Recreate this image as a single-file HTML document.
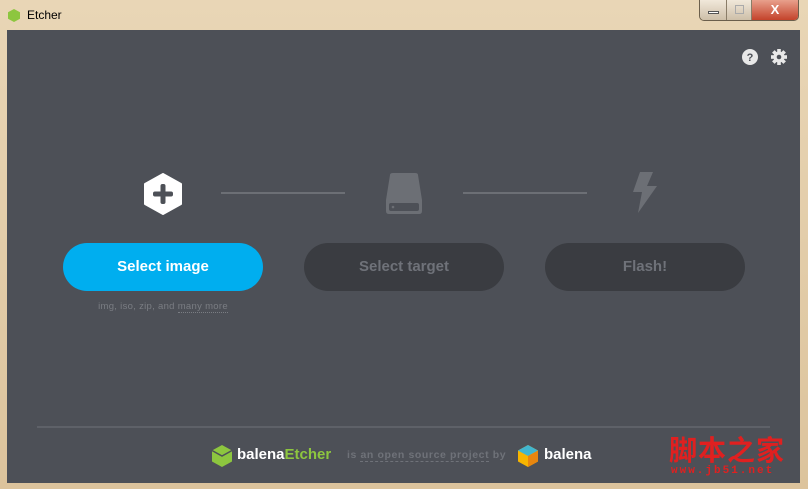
<!DOCTYPE html>
<html><head><meta charset="utf-8"><style>
*{margin:0;padding:0;box-sizing:border-box}
body{width:808px;height:489px;overflow:hidden;background:linear-gradient(180deg,#e9d6b6,#dcc39c);font-family:"Liberation Sans",sans-serif;position:relative}
.title{position:absolute;left:27px;top:8px;font-size:12px;color:#000}
.ico{position:absolute;left:8px;top:9px;width:12px;height:13px;background:#8dc63f;clip-path:polygon(50% 0,100% 25%,100% 75%,50% 100%,0 75%,0 25%)}
.btns{position:absolute;left:699px;top:0;height:21px;display:flex;border:1px solid #6b5f4c;border-top:none;border-radius:0 0 5px 5px;overflow:hidden}
.btns div{height:20px;background:linear-gradient(#f1e8da,#cdbfa8);border-right:1px solid #8a7d68}
.main{position:absolute;left:7px;top:30px;width:793px;height:453px;background:#4d5057}
.line{position:absolute;height:2px;background:#6c6f75}
.btn{position:absolute;top:213px;width:200px;height:48px;border-radius:24px;font-weight:bold;font-size:15px;text-align:center;line-height:48px}
.foot{position:absolute;left:30px;top:396px;width:733px;height:2px;background:#5e6168}
</style></head><body>
<div class="ico"></div><div class="title">Etcher</div>
<div class="btns"><div style="width:27px;position:relative"><span style="position:absolute;left:8px;top:11px;width:11px;height:3px;border:1px solid #555;background:#fff"></span></div><div style="width:25px;position:relative"><span style="position:absolute;left:8px;top:5px;width:9px;height:9px;border:1px solid #aaa"></span></div><div style="width:46px;background:linear-gradient(#e8a08c,#c4432b);color:#fff;font-weight:bold;text-align:center;line-height:19px;font-size:13px;border:none">X</div></div>
<div class="main">
<svg style="position:absolute;left:733px;top:18px" width="52" height="20" viewBox="0 0 52 20">
<circle cx="10" cy="9" r="8" fill="#e8e8e8"/><text x="10" y="13" font-size="11" font-weight="bold" text-anchor="middle" fill="#4d5057" font-family="Liberation Sans">?</text>
<g transform="translate(39,9)" fill="#e8e8e8"><circle r="5.5"/><g id="t"><rect x="-1.8" y="-8" width="3.6" height="16"/></g><use href="#t" transform="rotate(45)"/><use href="#t" transform="rotate(90)"/><use href="#t" transform="rotate(135)"/><circle r="2.3" fill="#4d5057"/></g>
</svg>
<svg style="position:absolute;left:137px;top:143px" width="38" height="42" viewBox="0 0 38 42"><polygon points="19,1 37,11 37,31 19,41 1,31 1,11" fill="#fff" stroke="#fff" stroke-linejoin="round" stroke-width="2"/><rect x="16.5" y="11" width="5" height="20" rx="2" fill="#4d5057"/><rect x="9" y="18.5" width="20" height="5" rx="2" fill="#4d5057"/></svg>
<div class="line" style="left:214px;top:162px;width:124px"></div>
<div class="line" style="left:456px;top:162px;width:124px"></div>
<svg style="position:absolute;left:377px;top:143px" width="40" height="42" viewBox="0 0 40 42"><path d="M6 2 Q6 0 9 0 H31 Q34 0 34 2 L38 27 V38 Q38 41 35 41 H5 Q2 41 2 38 V27 Z" fill="#6c6f75"/><rect x="5" y="30" width="30" height="8" rx="2" fill="#4d5057"/><circle cx="9" cy="34" r="1.3" fill="#6c6f75"/></svg>
<svg style="position:absolute;left:623px;top:142px" width="28" height="42" viewBox="0 0 28 42"><path d="M10 0 H23 L17 14 H27 L8 41 L12 20 H3 Z" fill="#6c6f75"/></svg>
<div class="btn" style="left:56px;background:#00aeef;color:#fff">Select image</div>
<div class="btn" style="left:297px;background:#3a3c41;color:#6f7279">Select target</div>
<div class="btn" style="left:538px;background:#3a3c41;color:#6f7279">Flash!</div>
<div style="position:absolute;left:56px;width:200px;top:271px;text-align:center;font-size:9.5px;color:#7a7d83;letter-spacing:.3px">img, iso, zip, and <span style="border-bottom:1px dotted #7a7d83">many more</span></div>
<div class="foot"></div>
<svg style="position:absolute;left:204px;top:414px" width="22" height="24" viewBox="0 0 22 24"><polygon points="11,1 21,6.5 21,17.5 11,23 1,17.5 1,6.5" fill="#8dc63f"/><polyline points="1,6.5 11,12 21,6.5 M11,12 11,23" fill="none" stroke="#4d5057" stroke-width="1.5"/></svg>
<div style="position:absolute;left:230px;top:416px;font-size:15px;font-weight:bold;color:#fff">balena<span style="color:#8dc63f">Etcher</span></div>
<div style="position:absolute;left:340px;top:419px;font-size:10.5px;font-weight:bold;color:#6f7279;letter-spacing:.6px">is <span style="border-bottom:1px dashed #6f7279">an open source project</span> by</div>
<svg style="position:absolute;left:510px;top:414px" width="22" height="24" viewBox="0 0 22 24"><polygon points="11,1 21,6.5 21,17.5 11,23 1,17.5 1,6.5" fill="#f7b500"/><polygon points="11,1 21,6.5 11,12 1,6.5" fill="#41b6cf"/><polygon points="11,12 21,6.5 21,17.5 11,23" fill="#e8860f"/></svg>
<div style="position:absolute;left:537px;top:416px;font-size:15px;font-weight:bold;color:#fff">balena</div>
<div style="position:absolute;left:662px;top:402px;font-size:28px;font-weight:bold;color:#e02020;font-family:'Noto Sans CJK SC',sans-serif;letter-spacing:1px;line-height:34px">脚本之家</div>
<div style="position:absolute;left:664px;top:435px;font-size:11px;color:#e02020;font-family:'Liberation Mono',monospace;letter-spacing:2px;font-weight:bold">www.jb51.net</div>
</div>
</body></html>
